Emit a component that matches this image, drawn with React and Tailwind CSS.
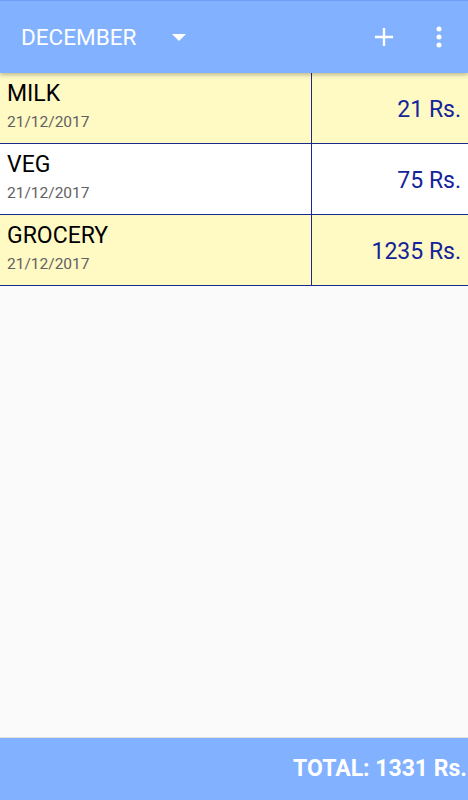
import React from 'react';

const items = [
  { name: 'MILK', date: '21/12/2017', amount: '21 Rs.', bg: 'bg-[#fff9c4]' },
  { name: 'VEG', date: '21/12/2017', amount: '75 Rs.', bg: 'bg-white' },
  { name: 'GROCERY', date: '21/12/2017', amount: '1235 Rs.', bg: 'bg-[#fff9c4]' },
];

export default function App() {
  return (
    <div className="h-[800px] w-[468px] flex flex-col bg-[#fafafa] font-['Roboto',sans-serif] overflow-hidden">
      {/* Toolbar */}
      <header className="h-[73px] flex items-center bg-[#82b1ff] border-t border-[#6e9ef5] shadow-[0_2px_4px_rgba(0,0,0,0.25)] z-10">
        <span className="ml-[21px] text-[22.5px] text-white leading-none">DECEMBER</span>
        <svg className="ml-[36px]" width="14" height="8" viewBox="0 0 14 8">
          <path d="M0 1 L14 1 L7 8 Z" fill="white" />
        </svg>
        <div className="flex-1" />
        <svg width="20" height="20" viewBox="0 0 20 20" className="mr-[42px]">
          <path d="M10 1 V19 M1 10 H19" stroke="white" strokeWidth="2.4" />
        </svg>
        <svg width="6" height="22" viewBox="0 0 6 22" className="mr-[26px]">
          <circle cx="3" cy="3" r="2.5" fill="white" />
          <circle cx="3" cy="11" r="2.5" fill="white" />
          <circle cx="3" cy="19" r="2.5" fill="white" />
        </svg>
      </header>

      {/* List */}
      <div className="flex-1">
        {items.map((item) => (
          <div key={item.name} className={`h-[71px] flex border-b border-[#1a2a8c] ${item.bg}`}>
            <div className="w-[312px] border-r border-[#1a2a8c] pl-[7px] pt-[7px]">
              <div className="text-[23px] leading-[27px] text-black">{item.name}</div>
              <div className="text-[15.5px] leading-[18px] mt-[6px] text-[#616161]">{item.date}</div>
            </div>
            <div className="flex-1 flex items-center justify-end pr-[7px] pt-[4px]">
              <span className="text-[23px] text-[#14239a]">{item.amount}</span>
            </div>
          </div>
        ))}
      </div>

      {/* Footer */}
      <footer className="h-[63px] flex items-center justify-end bg-[#82b1ff] border-t border-[#e0e0e0]">
        <span className="text-[23px] font-bold text-white pr-[1px]">TOTAL: 1331 Rs.</span>
      </footer>
    </div>
  );
}
